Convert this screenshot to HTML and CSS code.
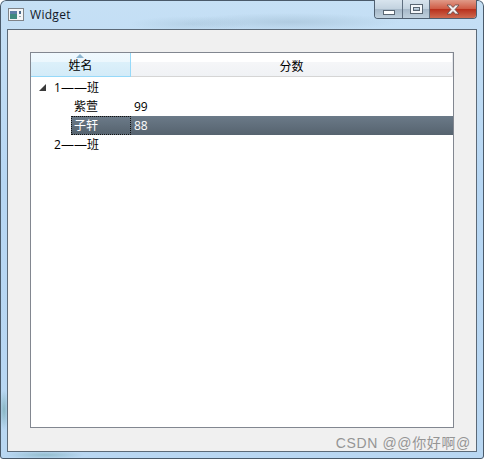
FILE: index.html
```html
<!DOCTYPE html>
<html lang="en">

<head>
  <meta charset="UTF-8" />
  <title>Widget</title>
  <link rel="stylesheet" href="styles.css">
</head>

<body>
  <div class="window">
    <div class="titlebar">
      <div class="title">
        <svg class="app-icon" width="16" height="14" viewBox="0 0 16 14">
          <rect x="0.5" y="0.5" width="15" height="12" fill="#f4f6f8" stroke="#7f8388" />
          <rect x="2" y="3" width="7" height="8" fill="#3f8a80" />
          <rect x="2" y="3" width="7" height="3" fill="#5c7fa8" />
          <rect x="11" y="3" width="2" height="3" fill="#4a6a8a" />
          <rect x="11" y="8" width="2" height="1" fill="#9aa5ae" />
        </svg>
        <span class="title-text">Widget</span>
      </div>
      <div class="controls">
        <div class="ctl ctl-min"><span class="min-glyph"></span></div>
        <div class="ctl ctl-max"><span class="max-glyph"></span></div>
        <div class="ctl ctl-close">
          <svg width="16" height="11" viewBox="0 0 16 11">
            <path d="M2 1h3.500L8 3.400 10.500 1H14l-4 4.500L14 10h-3.500L8 7.600 5.500 10H2l4-4.500z" fill="#f2eeee" stroke="#5d4a4a" stroke-width="0.8" />
          </svg>
        </div>
      </div>
    </div>

    <div class="client">
      <div class="tree">
        <div class="header">
          <div class="head-cell head-active"><span class="sort-arrow"></span>姓名</div>
          <div class="head-cell">分数</div>
        </div>
        <div class="rows">
          <div class="row">
            <div class="name indent-top"><span class="branch"></span>1<span class="dash">——</span>班</div>
          </div>
          <div class="row">
            <div class="name indent-child">紫萱</div>
            <div class="score">99</div>
          </div>
          <div class="row row-selected">
            <div class="name"><span class="focus-cell">子轩</span></div>
            <div class="score">88</div>
          </div>
          <div class="row">
            <div class="name indent-top"><span class="branch-empty"></span>2<span class="dash">——</span>班</div>
          </div>
        </div>
      </div>
    </div>

    <div class="watermark">CSDN @@你好啊@</div>
  </div>
</body>

</html>
```

FILE: styles.css
```css
html,
body {
  margin: 0;
  padding: 0;
}

body {
  width: 484px;
  height: 459px;
  overflow: hidden;
  font-family: 'Open Sans', 'Noto Sans CJK SC', sans-serif;
  font-size: 12px;
  color: #000;
}

.window {
  position: relative;
  box-sizing: border-box;
  width: 484px;
  height: 459px;
  display: flex;
  flex-direction: column;
  padding: 0 7px 7px 7px;
  border-radius: 6px 6px 3px 3px;
  box-shadow: inset 0 0 0 1px #4a5a6a;
  background:
    radial-gradient(ellipse 110px 9px at 290px 22px, rgba(130, 160, 180, .3), transparent),
    radial-gradient(ellipse 60px 8px at 190px 24px, rgba(140, 170, 190, .25), transparent),
    radial-gradient(ellipse 5px 20px at 4px 410px, rgba(90, 150, 150, .5), transparent),
    radial-gradient(ellipse 40px 4px at 45px 455px, rgba(90, 150, 150, .4), transparent),
    linear-gradient(#c6e0f5, #b6d6f3 40%, #b9d7f2);
}

.titlebar {
  height: 29px;
  flex: none;
  display: flex;
  justify-content: space-between;
  align-items: flex-start;
}

.title {
  display: flex;
  align-items: center;
  gap: 6px;
  margin: 7px 0 0 1px;
  height: 16px;
  color: #101828;
}

.title-text {
  letter-spacing: 0.3px;
  position: relative;
  top: -1px;
}

.controls {
  display: flex;
  height: 19px;
  border: 1px solid #4f5f70;
  border-top: none;
  border-radius: 0 0 4px 4px;
  overflow: hidden;
  box-sizing: border-box;
}

.ctl {
  display: flex;
  align-items: center;
  justify-content: center;
  height: 18px;
  box-sizing: border-box;
  background: linear-gradient(#d8e4ee, #c2d2df 50%, #a6b8c8 51%, #bfd0dd);
}

.ctl-min {
  width: 28px;
  border-right: 1px solid #5f6f80;
}

.ctl-max {
  width: 27px;
  border-right: 1px solid #5f6f80;
}

.ctl-close {
  width: 46px;
  background: linear-gradient(#e09a88, #cf5a44 50%, #b8301c 51%, #cf6a50);
}

.min-glyph {
  display: block;
  width: 10px;
  height: 3px;
  margin-top: 6px;
  background: #fff;
  border: 1px solid #5a6672;
}

.max-glyph {
  display: block;
  width: 7px;
  height: 4px;
  border: 2px solid #f4f7fa;
  outline: 1px solid #5a6672;
  box-shadow: inset 0 0 0 1px #5a6672;
}

.client {
  flex: 1;
  display: flex;
  background: #f0f0f0;
  border: 1px solid #5c6a78;
  padding: 22px 22px 23px 22px;
  box-sizing: border-box;
  min-height: 0;
}

.tree {
  flex: 1;
  background: #fff;
  border: 1px solid #828790;
  display: flex;
  flex-direction: column;
}

.header {
  display: grid;
  grid-template-columns: 100px 1fr;
  height: 24px;
  flex: none;
  box-sizing: border-box;
  border-bottom: 1px solid #d5d5d5;
  background: linear-gradient(#fff, #fff 40%, #f5f6f8 41%, #f0f2f5);
}

.head-cell {
  position: relative;
  display: flex;
  align-items: center;
  justify-content: center;
  padding-top: 1px;
  box-sizing: border-box;
  border-right: 1px solid #e4e6ea;
}

.head-active {
  height: 24px;
  background: linear-gradient(#f0f9fe, #ecf7fd 40%, #dcf0fa 41%, #d3ebf8);
  border-right: 1px solid #96d9f9;
  border-bottom: 1px solid #96d9f9;
}

.sort-arrow {
  position: absolute;
  top: 1px;
  left: 45px;
  width: 0;
  height: 0;
  border-left: 4px solid transparent;
  border-right: 4px solid transparent;
  border-bottom: 4px solid #8db5cf;
}

.rows {
  padding-top: 1px;
}

.row {
  display: grid;
  grid-template-columns: 100px 1fr;
  height: 19px;
  line-height: 19px;
}

.name {
  display: flex;
  align-items: center;
  white-space: nowrap;
}

.dash {
  font-size: 13px;
  line-height: 19px;
}

.indent-top {
  padding-left: 8px;
}

.indent-child {
  padding-left: 43px;
}

.branch,
.branch-empty {
  display: block;
  width: 7px;
  height: 7px;
  margin-right: 8px;
  flex: none;
}

.branch {
  background: #3a3a3a;
  clip-path: polygon(100% 0, 100% 100%, 0 100%);
}

.score {
  padding-left: 3px;
}

.row-selected {
  color: #fff;
}

.row-selected .name {
  margin-left: 40px;
  align-items: stretch;
}

.row-selected .score {
  background: linear-gradient(#6b7a88, #56636f);
}

.focus-cell {
  flex: 1;
  box-sizing: border-box;
  padding-left: 2px;
  line-height: 17px;
  border: 1px dotted #111;
  background: linear-gradient(#6b7a88, #56636f);
}

.watermark {
  position: absolute;
  right: 13px;
  bottom: 7px;
  font-family: 'Liberation Sans', 'Noto Sans CJK SC', sans-serif;
  font-size: 14px;
  color: #959595;
  letter-spacing: 0.65px;
}
```
